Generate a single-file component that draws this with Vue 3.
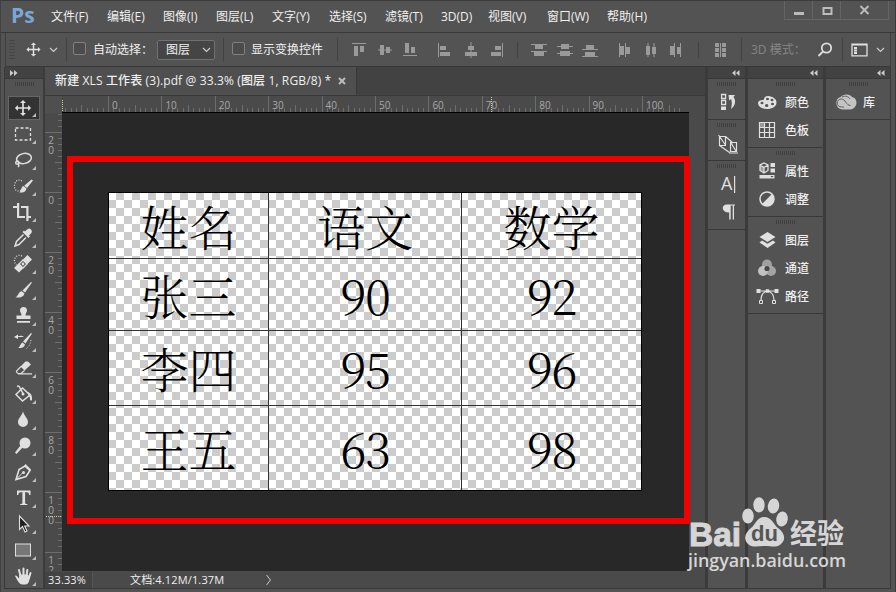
<script setup>
const menus = [
  { name: '文件(F)', w: 56 },
  { name: '编辑(E)', w: 56 },
  { name: '图像(I)', w: 53 },
  { name: '图层(L)', w: 56 },
  { name: '文字(Y)', w: 57 },
  { name: '选择(S)', w: 56 },
  { name: '滤镜(T)', w: 56 },
  { name: '3D(D)', w: 47 },
  { name: '视图(V)', w: 59 },
  { name: '窗口(W)', w: 60 },
  { name: '帮助(H)', w: 50 }
];

const moveIcon = '<path d="M11 6v5H6V8.500L2.500 12 6 15.500V13h5v5H8.500L12 21.500 15.500 18H13v-5h5v2.500L21.500 12 18 8.500V11h-5V6h2.500L12 2.500 8.500 6z" transform="translate(1.800 1.800) scale(.85)"/>';

// toolbar icons, 24x24
const tools = [
  moveIcon,
  '<rect x="4.500" y="6" width="15" height="12" class="ln" stroke-width="1.300" stroke-dasharray="3 2"/>',
  '<g class="ln" stroke-width="1.500"><ellipse cx="13" cy="10.500" rx="7.500" ry="5" transform="rotate(-12 13 10.500)"/><path d="M6 13c-2 1-1.500 3.500.500 3 2-.500 2-3-.500-3M7 16c1.500 1 1 2 0 3"/></g>',
  '<path class="ln" stroke-width="1.200" stroke-dasharray="1 1.500" d="M11 7C6 4 3 9 3.500 13c.5 4 4 5 7 3"/><path d="M20.500 5.500l1.500 1-6 7.500-2.800-2.200z"/><path d="M12.500 12l3 2.500c-.5 3.500-4 4.500-7.500 4 2.500-1 1.500-5.500 4.500-6.500z"/>',
  '<path d="M6 3h2.200v13H14v2H6V8H2V6h4zM10 6h7.500v10H20v2h-2.500v3h-2.200V8H10z"/>',
  '<path d="M20 3.500c1.500 1.500 1 3-.5 4.500l-1.500 1.500 1 1-1.500 1.500-6-6L13 4.500l1 1L15.500 4c1.500-1.500 3-2 4.500-.5z"/><path class="ln" stroke-width="1.500" d="M12.500 8.500l-7 7L4 20l4-1.500 7-7"/>',
  '<path class="ln" stroke-width="1.200" stroke-dasharray="1 1.500" d="M11 4C7 2 3 5 3.500 9c0 2 1 3 2 4"/><path d="M16.500 3l4.500 4.500-4.500 4.500L12 7.500zM7.500 11.500L12 16.500l-4 4L3 16z"/><path class="ln" stroke-width="1.300" d="M12 8L8 12l4 4 4-4z"/><circle cx="12" cy="12" r="1.400"/>',
  '<path d="M20 4l1 .5-7 10-2.500-2z"/><path d="M10.500 13l3 2.500c-1 3.500-4.500 4.500-9.500 4 3-.5 3-5 6.500-6.500z"/>',
  '<path d="M9 6.500a3.500 3.500 0 0 1 7 0c0 2-1.500 2.500-1.500 5h5V15h-14v-3.500h5c0-2.500-1.500-3-1.500-5zM6 17h13v1.800H6z"/>',
  '<path d="M20 3l1 .5-6.500 10-2.500-2zM11.500 12.500l2.500 2c-.5 3-4 4-7 3.500 2.500-1 2-4.500 4.500-5.500zM3 7l4-2.500v1.700c2.500-.8 4-.8 6 .8H7v2z"/><path class="ln" stroke-dasharray="1 1.500" d="M20 10c-.5 4-2 6.500-5 9"/>',
  '<path d="M14.500 5.500h2.500l3 3-6.500 6-4-4z"/><path class="ln" stroke-width="1.200" d="M10 10.500L5.500 15c-.5 1 1 2.500 2 2.500H10l3.500-3M7 17.800h14"/>',
  '<path class="ln" stroke-width="1.500" d="M11.500 6L19 13l-7.500 6L5 12.500zM6 4.500c1.500-1 2.500 0 3 1.500l3 5.500"/><circle cx="12" cy="12" r="1.500"/><path d="M16 10c4 .5 5.500 4 5 8-1 1.500-2.500 0-2-2z"/>',
  '<path d="M12 3.500c1.500 5 5 7 5 10.500a5 5 0 0 1-10 0c0-3.500 3.500-5.500 5-10.500z"/>',
  '<circle cx="14" cy="9" r="5.500"/><path d="M9.500 11.500l2 2L5.500 20 4 18.500z"/>',
  '<path class="ln" stroke-width="1.600" d="M14 6l5 4.500-4 6-10 3 3-10z"/><path class="ln" d="M5 19.500l7-7"/><circle cx="12.500" cy="12.500" r="1.500"/><path d="M14.500 4l5.500 5.500-1.500 1.500L13 6z"/>',
  '<path d="M6 4.500h13.500V9h-1.300c-.3-2-.7-2.700-2.700-2.700h-1.400v10.500c0 1 .5 1.200 2.200 1.300V19H9.200v-.9c1.700-.1 2.200-.3 2.200-1.300V6.300H10c-2 0-2.400.7-2.700 2.700H6z"/>',
  '<path d="M8.500 4v13.500l3-3L14 20l2-1-2.400-5h4.400z" fill="#1e1e1e" stroke="#dedede" stroke-width="1.100"/>',
  '<rect x="4.500" y="6" width="15" height="12" fill="#777" stroke="#e0e0e0"/>',
  '<path class="ln" stroke-width="2" stroke-linecap="round" d="M9.500 12L8 6M12.500 11V4.500M15.500 12l.8-6M18 14l1.500-5"/><path d="M4 12c1-1 2 0 4 2.500l.5-4H17l2 3c-1 4-1.500 7-4.500 7h-3C8 20.500 6 15.500 4 12z"/>'
];

// option bar align / distribute icons, 20x16
const aligns = [
  [
    '<path d="M3 1h14v1H3zM5 4h4v10H5zM11 4h4v6h-4z"/>',
    '<path d="M3 7.500h14v1H3zM5 3h4v10H5zM11 5h4v6h-4z"/>',
    '<path d="M3 13h14v1H3zM5 1h4v10H5zM11 5h4v6h-4z"/>'
  ],
  [
    '<path d="M3 1h1v14H3zM5 4h6v4H5zM5 10h10v4H5z"/>',
    '<path d="M9.500 0h1v16h-1zM7 4h6v4H7zM4 10h12v4H4z"/>',
    '<path d="M16 1h1v14h-1zM9 4h6v4H9zM5 10h10v4H5z"/>'
  ],
  [
    '<path d="M2 2h16v1H2zM6 3h8v4H6zM2 9h16v1H2zM5 10h10v4H5z"/>',
    '<path d="M2 4h16v1H2zM6 2h8v5H6zM2 11h16v1H2zM5 9h10v5H5z"/>',
    '<path d="M2 7h16v1H2zM6 3h8v4H6zM2 14h16v1H2zM5 10h10v4H5z"/>'
  ],
  [
    '<path d="M4 1h1v14H4zM5 4h4v9H5zM10 1h1v14h-1zM11 5h4v7h-4z"/>',
    '<path d="M6.500 1h1v14h-1zM5 4h4v9H5zM12.500 1h1v14h-1zM11 5h4v7h-4z"/>',
    '<path d="M8 1h1v14H8zM4 4h4v9H4zM14 1h1v14h-1zM11 5h3v7h-3z"/>'
  ],
  ['<path d="M5 1h4v4H5zM5 6h4v4H5zM5 11h4v4H5zM12 1h4v4h-4zM12 6h4v4h-4zM12 11h4v4h-4zM10 1h1v14h-1z"/>']
];

const panelGroups = [
  {
    rows: [
      { name: '颜色', icon: '<path fill-rule="evenodd" d="M3 13c0-2 2-3 5-3 2 0 0-4 5-4 5 .5 8.500 3 8.500 6.500 0 4-4 6.500-9.500 6.500S3 16 3 13zM5.500 13a1.500 1.300 0 1 0 3 0 1.500 1.300 0 1 0-3 0zM11 9a1.500 1.300 0 1 0 3 0 1.500 1.300 0 1 0-3 0zM15.500 10a1.500 1.300 0 1 0 3 0 1.500 1.300 0 1 0-3 0zM16 14a1.500 1.300 0 1 0 3 0 1.500 1.300 0 1 0-3 0zM10 15.500a1.700 1.500 0 1 0 3.400 0 1.700 1.500 0 1 0-3.400 0z"/>' },
      { name: '色板', icon: '<path class="ln" stroke-width="1.200" d="M4.500 4.500h15v15h-15zM4.500 9.500h15M4.500 14.500h15M9.500 4.500v15M14.500 4.500v15"/><path fill="#999" d="M5 5h4v4H5z"/>' }
    ]
  },
  {
    rows: [
      { name: '属性', icon: '<path fill="#999" d="M5 6l4 2.500V14l-4-2.500z"/><path class="ln" stroke-width="1.300" d="M9 4l4 2v5.500L9 14l-4-2.500V6zM5 6l4 2.500L13 6M9 8.500V14"/><path d="M15.500 4H20v4h-4.500zM15.500 9.500H20v4h-4.500zM4.500 16h15v3.500h-15z"/><path fill="#444" d="M15.500 17h3L17 18.500z"/>' },
      { name: '调整', icon: '<circle cx="12" cy="12" r="7" class="ln" stroke-width="1.500"/><path d="M17 7A7 7 0 0 1 7 17z"/>' }
    ]
  },
  {
    rows: [
      { name: '图层', icon: '<path d="M12.500 4l8 5-8 5-8-5zM7 12.500l5.500 3.300 5.500-3.300 2.500 2-8 5.500-8-5.500z"/>' },
      { name: '通道', icon: '<circle cx="12" cy="8.500" r="5" fill="#a0a0a0"/><circle cx="8" cy="15" r="5" fill="#d5d5d5" opacity=".85"/><circle cx="16" cy="15" r="5" fill="#b8b8b8" opacity=".8"/><circle cx="12" cy="12.500" r="2.600" fill="#484848"/>' },
      { name: '路径', icon: '<path class="ln" stroke-width="1.200" d="M3 7h19M6 16c0-4 2-8 6.500-9 4.500 1 6.500 5 6.500 9"/><path d="M1.500 5h4v4h-4zM19.500 5h4v4h-4zM10.800 5.300h3.400v3.400h-3.400z"/><path fill="#535353" class="ln2" d="M4.500 16.500h3v3h-3zM17.500 16.500h3v3h-3z"/>' }
    ]
  }
];

const iconHistory = '<path class="ln" stroke-width="1.300" d="M5.600 4.500h4v4h-4zM5.600 10.500h4v4h-4z"/><path d="M5 16.500h5V20H5zM12.500 5H19l-1.500 2c3 4 1.500 9-2.500 12 1-4 1.200-7.500 0-10l-1.800 1.500z"/>';
const iconClone = '<path class="ln" stroke-width="1.200" d="M3.500 5.500h6v9h-6zM2.500 4l7 10M9.500 5.500L17 12M3.500 14.500l10 7M14.500 11.500h6v9h-6zM15 12l5 8M13 22h9"/>';

// horizontal ruler: 53.4px for 10 units, zero at 63px from the ruler's left end
const hTicks = [];
for (let i = -8; i <= 107; i++) {
  hTicks.push({ x: Math.round(63 + i * 5.34) + 0.5, y: i % 10 === 0 ? 0 : i % 5 === 0 ? 9 : 12 });
}
const hLabels = [];
for (let i = 0; i <= 10; i++) {
  hLabels.push({ x: 67 + i * 53.4, t: i * 10 });
}

// vertical ruler: 60px for 20 units, zero 80px below the top
const vTicks = [];
for (let i = -13; i <= 62; i++) {
  vTicks.push({ y: 80.5 + i * 6, x: i % 10 === 0 ? 0 : i % 5 === 0 ? 10 : 13 });
}
const vLabels = [];
for (let i = -1; i <= 6; i++) {
  // the last label only has room for two digits
  String(Math.abs(i * 20)).slice(0, i === 6 ? 2 : 3).split('').forEach((c, n) => {
    vLabels.push({ y: 91 + i * 60 + n * 10, t: c });
  });
}

const scores = [
  ['姓名', '语文', '数学'],
  ['张三', '90', '92'],
  ['李四', '95', '96'],
  ['王五', '63', '98']
];
</script>

<template>
  <div class="window">
    <header class="menubar">
      <span class="logo">Ps</span>
      <nav class="menus">
        <span v-for="m in menus" :key="m.name" :style="{ width: m.w + 'px' }">{{ m.name }}</span>
      </nav>
      <div class="controls">
        <svg width="28" height="18"><path d="M9 11h10v3H9z" /></svg>
        <svg width="28" height="18"><path d="M10.500 7h8v6h-8z" class="box" /></svg>
        <svg width="47" height="18"><path d="M19.500 5l8 8M27.500 5l-8 8" class="cross" /></svg>
      </div>
    </header>

    <div class="options">
      <i class="grip-v"></i>
      <svg class="icon opt-move" viewBox="0 0 24 24" v-html="moveIcon"></svg>
      <svg class="chev" viewBox="0 0 9 6"><path d="M1 1l3.500 3.500L8 1" /></svg>
      <i class="sep sep-a"></i>
      <i class="check"></i>
      <span class="opt-auto">自动选择：</span>
      <div class="select">图层<svg class="chev" viewBox="0 0 9 6"><path d="M1 1l3.500 3.500L8 1" /></svg></div>
      <i class="sep sep-b"></i>
      <i class="check"></i>
      <span class="opt-show">显示变换控件</span>
      <i class="sep"></i>
      <div v-for="(g, i) in aligns" :key="i" class="aligns" :class="'aligns-' + i">
        <svg v-for="(a, n) in g" :key="n" viewBox="0 0 20 16" v-html="a"></svg>
      </div>
      <i class="sep"></i>
      <span class="opt-mode">3D 模式：</span>
      <svg class="search" viewBox="0 0 16 16"><circle cx="9.500" cy="6" r="4.700" /><path d="M6 9.500L1.500 14" /></svg>
      <i class="sep sep-c"></i>
      <svg class="workspace" viewBox="0 0 17 14"><path class="ln" stroke-width="1.300" d="M1 1.200h15v11.600H1z" /><path d="M1 1h15v1.500H1zM3 4h3v2H3zM3 6.500h3v2H3zM3 9h3v2H3z" /></svg>
      <svg class="chev" viewBox="0 0 9 6"><path d="M1 1l3.500 3.500L8 1" /></svg>
    </div>

    <div class="work">
      <aside class="tools">
        <div class="bar-head"><svg width="8" height="6"><path d="M0 0l3.500 3L0 6zM4 0l3.500 3L4 6z" /></svg></div>
        <i class="grip"></i>
        <div v-for="(t, i) in tools" :key="i" class="tool" :class="{ active: i === 0 }">
          <svg class="icon" viewBox="0 0 24 24" v-html="t"></svg>
          <b class="corner"></b>
        </div>
      </aside>

      <main class="document">
        <div class="tabs">
          <div class="tab">
            <span>新建 XLS 工作表 (3).pdf @ 33.3% (图层 1, RGB/8) *</span>
            <svg width="8" height="8"><path d="M1 1l6 6M7 1L1 7" /></svg>
          </div>
        </div>
        <svg class="ruler-h" width="659" height="17">
          <path v-for="t in hTicks" :key="t.x" :d="`M${t.x} ${t.y}V16`" />
          <text v-for="l in hLabels" :key="l.t" :x="l.x" y="13">{{ l.t }}</text>
          <path d="M446.500 1V16" class="cursor" />
          <rect width="17" height="17" class="origin" />
          <path d="M17.500 4V16" class="cursor" />
          <rect x="17" y="16" width="627" height="1" class="edge" />
        </svg>
        <div class="viewport">
          <svg class="ruler-v" width="17" height="458">
            <path v-for="t in vTicks" :key="t.y" :d="`M${t.x} ${t.y - 1}H17`" />
            <text v-for="l in vLabels" :key="l.y" x="6" :y="l.y">{{ l.t }}</text>
            <path d="M1 403.500H17" class="cursor" />
          </svg>
          <div class="stage">
            <div class="sheet">
              <div v-for="(row, r) in scores" :key="r" class="row" :class="'row-' + r">
                <span v-for="(c, n) in row" :key="c" :class="{ num: r > 0 && n > 0 }">{{ c }}</span>
              </div>
            </div>
            <div class="frame"></div>
          </div>
        </div>
        <footer class="status">
          <span class="zoom">33.33%</span>
          <span class="docsize">文档:4.12M/1.37M</span>
          <svg width="8" height="12"><path d="M1.500 1l4 5-4 5" /></svg>
        </footer>
      </main>

      <aside class="docks">
        <section class="dock dock-icons">
          <div class="bar-head"><svg width="8" height="6"><path d="M3.500 0L0 3l3.500 3zM7.500 0L4 3l3.500 3z" /></svg></div>
          <div class="group g-one"><i class="grip"></i><svg class="icon" viewBox="0 0 24 24" v-html="iconHistory"></svg></div>
          <div class="group g-one"><i class="grip"></i><svg class="icon" viewBox="0 0 24 24" v-html="iconClone"></svg></div>
          <div class="group g-text">
            <i class="grip"></i>
            <svg width="24" height="56"><text x="4" y="21" class="glyph-a">A</text><path d="M17 7h1.200v17H17zM8.500 35.500H18v1h-1v14h-1.300v-14h-2v14h-1.500v-7C4 43.500 4 35.500 10 35.500z" /></svg>
          </div>
        </section>
        <section class="dock dock-panels">
          <div class="bar-head"><svg width="8" height="6"><path d="M3.500 0L0 3l3.500 3zM7.500 0L4 3l3.500 3z" /></svg></div>
          <div v-for="(g, i) in panelGroups" :key="i" class="group">
            <i class="grip"></i>
            <div v-for="p in g.rows" :key="p.name" class="panel">
              <svg class="icon" viewBox="0 0 24 24" v-html="p.icon"></svg>
              <span>{{ p.name }}</span>
            </div>
          </div>
        </section>
        <section class="dock dock-lib">
          <div class="bar-head"><svg width="8" height="6"><path d="M3.500 0L0 3l3.500 3zM7.500 0L4 3l3.500 3z" /></svg></div>
          <div class="group">
            <i class="grip"></i>
            <div class="panel">
              <svg class="cc" viewBox="0 0 22 16">
                <path fill="#c4c4c4" d="M7 15.500A6.500 6.500 0 0 1 5.500 3C7 1.500 9 .5 11.500.5c3 0 4.500 1 5.500 2.500 3 .5 4.500 3 4.500 6a6.500 6.500 0 0 1-6.500 6.500z" />
                <path fill="none" stroke="#606060" stroke-width="1" d="M9 13H6.500C4 13 2.200 11.200 2.200 9S4 5 6.500 5c4 0 4.500 6.500 9 6.500M7 3c3.500-1.600 6.500-.5 8 2" />
              </svg>
              <span>库</span>
            </div>
          </div>
        </section>
      </aside>
    </div>

    <!-- watermark over the lower right corner -->
    <svg class="watermark" width="170" height="82" viewBox="0 0 170 82">
      <text x="4" y="48.500" class="wm-bai" textLength="52" lengthAdjust="spacingAndGlyphs">Bai</text>
      <ellipse cx="63" cy="19" rx="5.800" ry="7.500" />
      <ellipse cx="74" cy="7.800" rx="5.700" ry="7.600" />
      <ellipse cx="88.500" cy="9" rx="5.700" ry="7.500" transform="rotate(8 88.500 9)" />
      <ellipse cx="97" cy="22" rx="5.800" ry="7.500" transform="rotate(8 97 22)" />
      <path d="M79 20c8 0 9 7 14 11 7 5 8 12 3 16-4 4-9 2-16 2s-13 2-17-2c-5-5-3-11 3-16 5-4 6-11 13-11z" />
      <text x="66" y="44" class="wm-du" textLength="27" lengthAdjust="spacingAndGlyphs">du</text>
      <text x="105" y="46.500" class="wm-jy" textLength="54" lengthAdjust="spacingAndGlyphs">经验</text>
      <text x="3" y="69.500" class="wm-url" textLength="158" lengthAdjust="spacingAndGlyphs">jingyan.baidu.com</text>
    </svg>
  </div>
</template>

<style>
body{
  background: #535353;
  overflow: hidden;
}
.ln{
  fill: none;
  stroke: #e0e0e0;
}
.ln2{
  stroke: #e0e0e0;
}
</style>

<style scoped>
.window{
  position: relative;
  width: 896px;
  height: 592px;
  box-sizing: border-box;
  display: flex;
  flex-direction: column;
  overflow: hidden;
  background: #535353;
  color: #f0f0f0;
  font-family: "Open Sans", "Noto Sans CJK SC", sans-serif;
  font-size: 12px;
  line-height: 16px;
  border-top: 1px solid #3c3c3c;
  border-left: 1px solid #3c4246;
  border-right: 1px solid #3a3a3a;
  white-space: nowrap;
}
svg{
  display: block;
  flex: none;
  fill: #e0e0e0;
}
i, b{
  flex: none;
}
.icon{
  width: 24px;
  height: 24px;
}

/* menu bar */
.menubar{
  height: 31px;
  display: flex;
  align-items: center;
  border-bottom: 1px solid #393939;
}
.logo{
  width: 40px;
  margin-left: 10px;
  color: #7ba7d7;
  font-family: "Open Sans", sans-serif;
  font-size: 21px;
  font-weight: 700;
  line-height: 28px;
  margin-top: -3px;
}
.menus{
  display: flex;
}
.menus span{
  flex: none;
}
.controls{
  display: flex;
  align-self: flex-start;
  margin-left: auto;
  margin-right: 6px;
  border: 1px solid #656565;
  border-top: none;
}
.controls svg{
  fill: #bcbcbc;
}
.controls svg + svg{
  border-left: 1px solid #656565;
  margin-left: -1px;
}
.controls .box{
  fill: none;
  stroke: #bcbcbc;
  stroke-width: 2;
}
.controls .cross{
  stroke: #bcbcbc;
  stroke-width: 2;
}

/* options bar */
.options{
  height: 33px;
  margin: 0 4px 0 4px;
  border-left: 1px solid #3e3e3e;
  border-right: 1px solid #3e3e3e;
  border-bottom: 1px solid #383838;
  display: flex;
  align-items: center;
}
.grip-v{
  width: 6px;
  height: 19px;
  margin-left: 3px;
  background: repeating-linear-gradient(#454545 0 1px, transparent 1px 3px);
}
.opt-move{
  width: 21px;
  height: 21px;
  margin-left: 8px;
  margin-right: 5px;
}
.chev{
  width: 9px;
  height: 6px;
  fill: none;
  stroke: #ccc;
  stroke-width: 1.2;
}
.sep{
  width: 1px;
  height: 23px;
  background: #424242;
}
.sep-a{
  margin: 0 6px 0 8px;
}
.check{
  width: 11px;
  height: 11px;
  border: 1px solid #818181;
  border-radius: 2px;
  background: #4b4b4b;
  margin-bottom: 3px;
}
.opt-auto{
  width: 64px;
  margin-left: 7px;
}
.select{
  width: 40px;
  height: 18px;
  padding: 0 8px;
  border: 1px solid #707070;
  border-radius: 2px;
  background: #454545;
  display: flex;
  align-items: center;
  justify-content: space-between;
}
.select .chev{
  margin-right: -5px;
}
.sep-b{
  margin: 0 8px 0 8px;
}
.opt-show{
  width: 86px;
  margin-left: 6px;
}
.aligns{
  display: flex;
  gap: 5.5px;
  margin-left: 11px;
}
.aligns svg{
  width: 20px;
  height: 16px;
  fill: #9a9a9a;
}
.aligns-1{
  margin-left: 15px;
}
.aligns-2{
  margin-left: 11px;
  padding-left: 11px;
  border-left: 1px solid #424242;
}
.aligns-3{
  margin-left: 15px;
}
.aligns-4{
  margin-left: 12px;
  padding-left: 11px;
  margin-right: 11px;
  border-left: 1px solid #424242;
}
.opt-mode{
  width: 55px;
  margin-left: 9px;
  color: #858585;
}
.search{
  width: 16px;
  height: 16px;
  margin-left: 11px;
  fill: none;
  stroke: #ddd;
  stroke-width: 1.8;
}
.sep-c{
  margin: 0 8px 0 9px;
}
.workspace{
  width: 17px;
  height: 14px;
  margin-right: 8px;
}

/* work area */
.work{
  height: 521px;
  margin: 0 4px 0 3px;
  display: flex;
  border-left: 1px solid #393939;
  border-right: 1px solid #393939;
  border-bottom: 1px solid #393939;
}
.bar-head{
  height: 11px;
  background: #424242;
  border-bottom: 1px solid #383838;
  display: flex;
  align-items: center;
}
.bar-head svg{
  fill: #ccc;
}
.grip{
  display: block;
  width: 19px;
  height: 4px;
  margin: 3px auto 0;
  background: repeating-linear-gradient(90deg, #404040 0 1px, transparent 1px 2px);
}
.tools{
  width: 38px;
  border-right: 2px solid #3b3b3b;
}
.tools .bar-head svg{
  margin-left: 5px;
}
.tools .grip{
  margin-bottom: 11px;
}
.tool{
  position: relative;
  height: 26px;
  width: 32px;
  margin-left: 3px;
  display: flex;
  align-items: center;
  justify-content: center;
}
.tool .icon{
  margin-right: 2px;
}
.tool.active{
  height: 24px;
  margin-top: -1px;
  margin-bottom: 1px;
  background: #333;
  box-shadow: 0 0 0 1px #666 inset;
}
.corner{
  position: absolute;
  right: 4px;
  bottom: 3px;
  border-left: 4px solid transparent;
  border-bottom: 4px solid #bbb;
}

.document{
  width: 660px;
  flex: none;
  display: flex;
  flex-direction: column;
  background: #4a4a4a;
}
.tabs{
  height: 28px;
  background: #424242;
  border-bottom: 1px solid #383838;
  display: flex;
}
.tab{
  width: 312px;
  background: #4f4f4f;
  border-right: 1px solid #383838;
  box-sizing: border-box;
  padding: 0 10px;
  display: flex;
  align-items: center;
  justify-content: space-between;
  font-weight: 500;
  letter-spacing: .13px;
}
.tab svg{
  stroke: #bbb;
  stroke-width: 2;
}
.ruler-h path, .ruler-v path{
  stroke: #6d6d6d;
}
.ruler-h text, .ruler-v text{
  fill: #a8a8a8;
  font-family: "Open Sans", sans-serif;
  font-size: 10px;
  text-anchor: start;
}
.ruler-v text{
  text-anchor: middle;
}
.ruler-h .cursor, .ruler-v .cursor{
  stroke: #c9c9a4;
  stroke-dasharray: 1 1;
}
.ruler-h .origin{
  fill: #4f4f4f;
}
.ruler-h .edge{
  fill: #000;
}
.viewport{
  display: flex;
  height: 458px;
}
.stage{
  position: relative;
  width: 627px;
  height: 458px;
  background: #282828;
}
.sheet{
  width: 532px;
  height: 297px;
  margin: 79px 0 0 46px;
  border: 1px solid #000;
  background: repeating-conic-gradient(#ccc 0 25%, #fff 0 50%) -1px -1px / 16px 16px;
  color: #000;
  font-family: "Noto Serif CJK SC", "Liberation Serif", "Noto Sans CJK SC", serif;
  font-size: 48px;
  font-weight: 300;
  line-height: 50px;
}
.row{
  box-sizing: border-box;
  display: grid;
  grid-template-columns: 160px 193px 179px;
  border-bottom: 1px solid #333;
}
.row span{
  display: flex;
  align-items: center;
  justify-content: center;
}
.row .num{
  letter-spacing: -1.5px;
}
.row span:not(:last-child){
  border-right: 1px solid #333;
}
.row-0{
  height: 66px;
}
.row-1{
  height: 72px;
}
.row-2{
  height: 75px;
}
.row-3{
  height: 84px;
  border-bottom: none;
}
.frame{
  position: absolute;
  left: 5px;
  top: 43px;
  width: 611px;
  height: 356px;
  border: 6px solid #f20000;
}
.status{
  flex: 1;
  display: flex;
  align-items: center;
  font-size: 11px;
  letter-spacing: .15px;
}
.zoom{
  width: 44px;
  padding-left: 3px;
  border-right: 1px solid #555;
  background: #434343;
}
.docsize{
  width: 135px;
  padding-left: 37px;
}
.status svg{
  fill: none;
  stroke: #ccc;
}

.docks{
  display: flex;
  flex: 1;
}
.dock{
  border-left: 3px solid #3b3b3b;
}
.dock .bar-head svg{
  margin-left: auto;
  margin-right: 5px;
}
.dock-icons{
  width: 37px;
}
.dock-panels{
  width: 75px;
}
.dock-lib{
  flex: 1;
}
.group{
  display: flow-root;
  border-bottom: 1px solid #383838;
  padding-bottom: 3px;
}
.g-one{
  height: 37px;
}
.g-one .icon{
  margin: 4px 0 0 8px;
}
.g-text{
  height: 65px;
}
.g-text svg{
  margin-left: 9px;
  margin-top: 1px;
}
.glyph-a{
  font-family: "Open Sans", sans-serif;
  font-size: 18px;
}
.panel{
  height: 28px;
  padding-left: 7px;
  display: flex;
  align-items: center;
  gap: 6px;
  font-weight: 500;
}
.panel span{
  padding-top: 1px;
}
.dock-lib .group .panel{
  padding-left: 9px;
}
.group .grip + .panel{
  margin-top: 2px;
}
.cc{
  width: 22px;
  height: 16px;
}

.watermark{
  position: absolute;
  left: 684px;
  top: 496px;
  fill: #d6d6d6;
}
.wm-bai{
  font-family: "Liberation Sans", sans-serif;
  font-size: 34px;
  font-weight: 700;
  stroke: #d6d6d6;
  stroke-width: 1;
}
.wm-du{
  fill: #555;
  font-family: "Liberation Sans", sans-serif;
  font-size: 22px;
  font-weight: 700;
}
.wm-jy{
  font-family: "Noto Sans CJK SC", sans-serif;
  font-size: 28px;
  font-weight: 700;
}
.wm-url{
  font-family: "Open Sans", sans-serif;
  font-size: 18px;
  font-weight: 600;
}
</style>
